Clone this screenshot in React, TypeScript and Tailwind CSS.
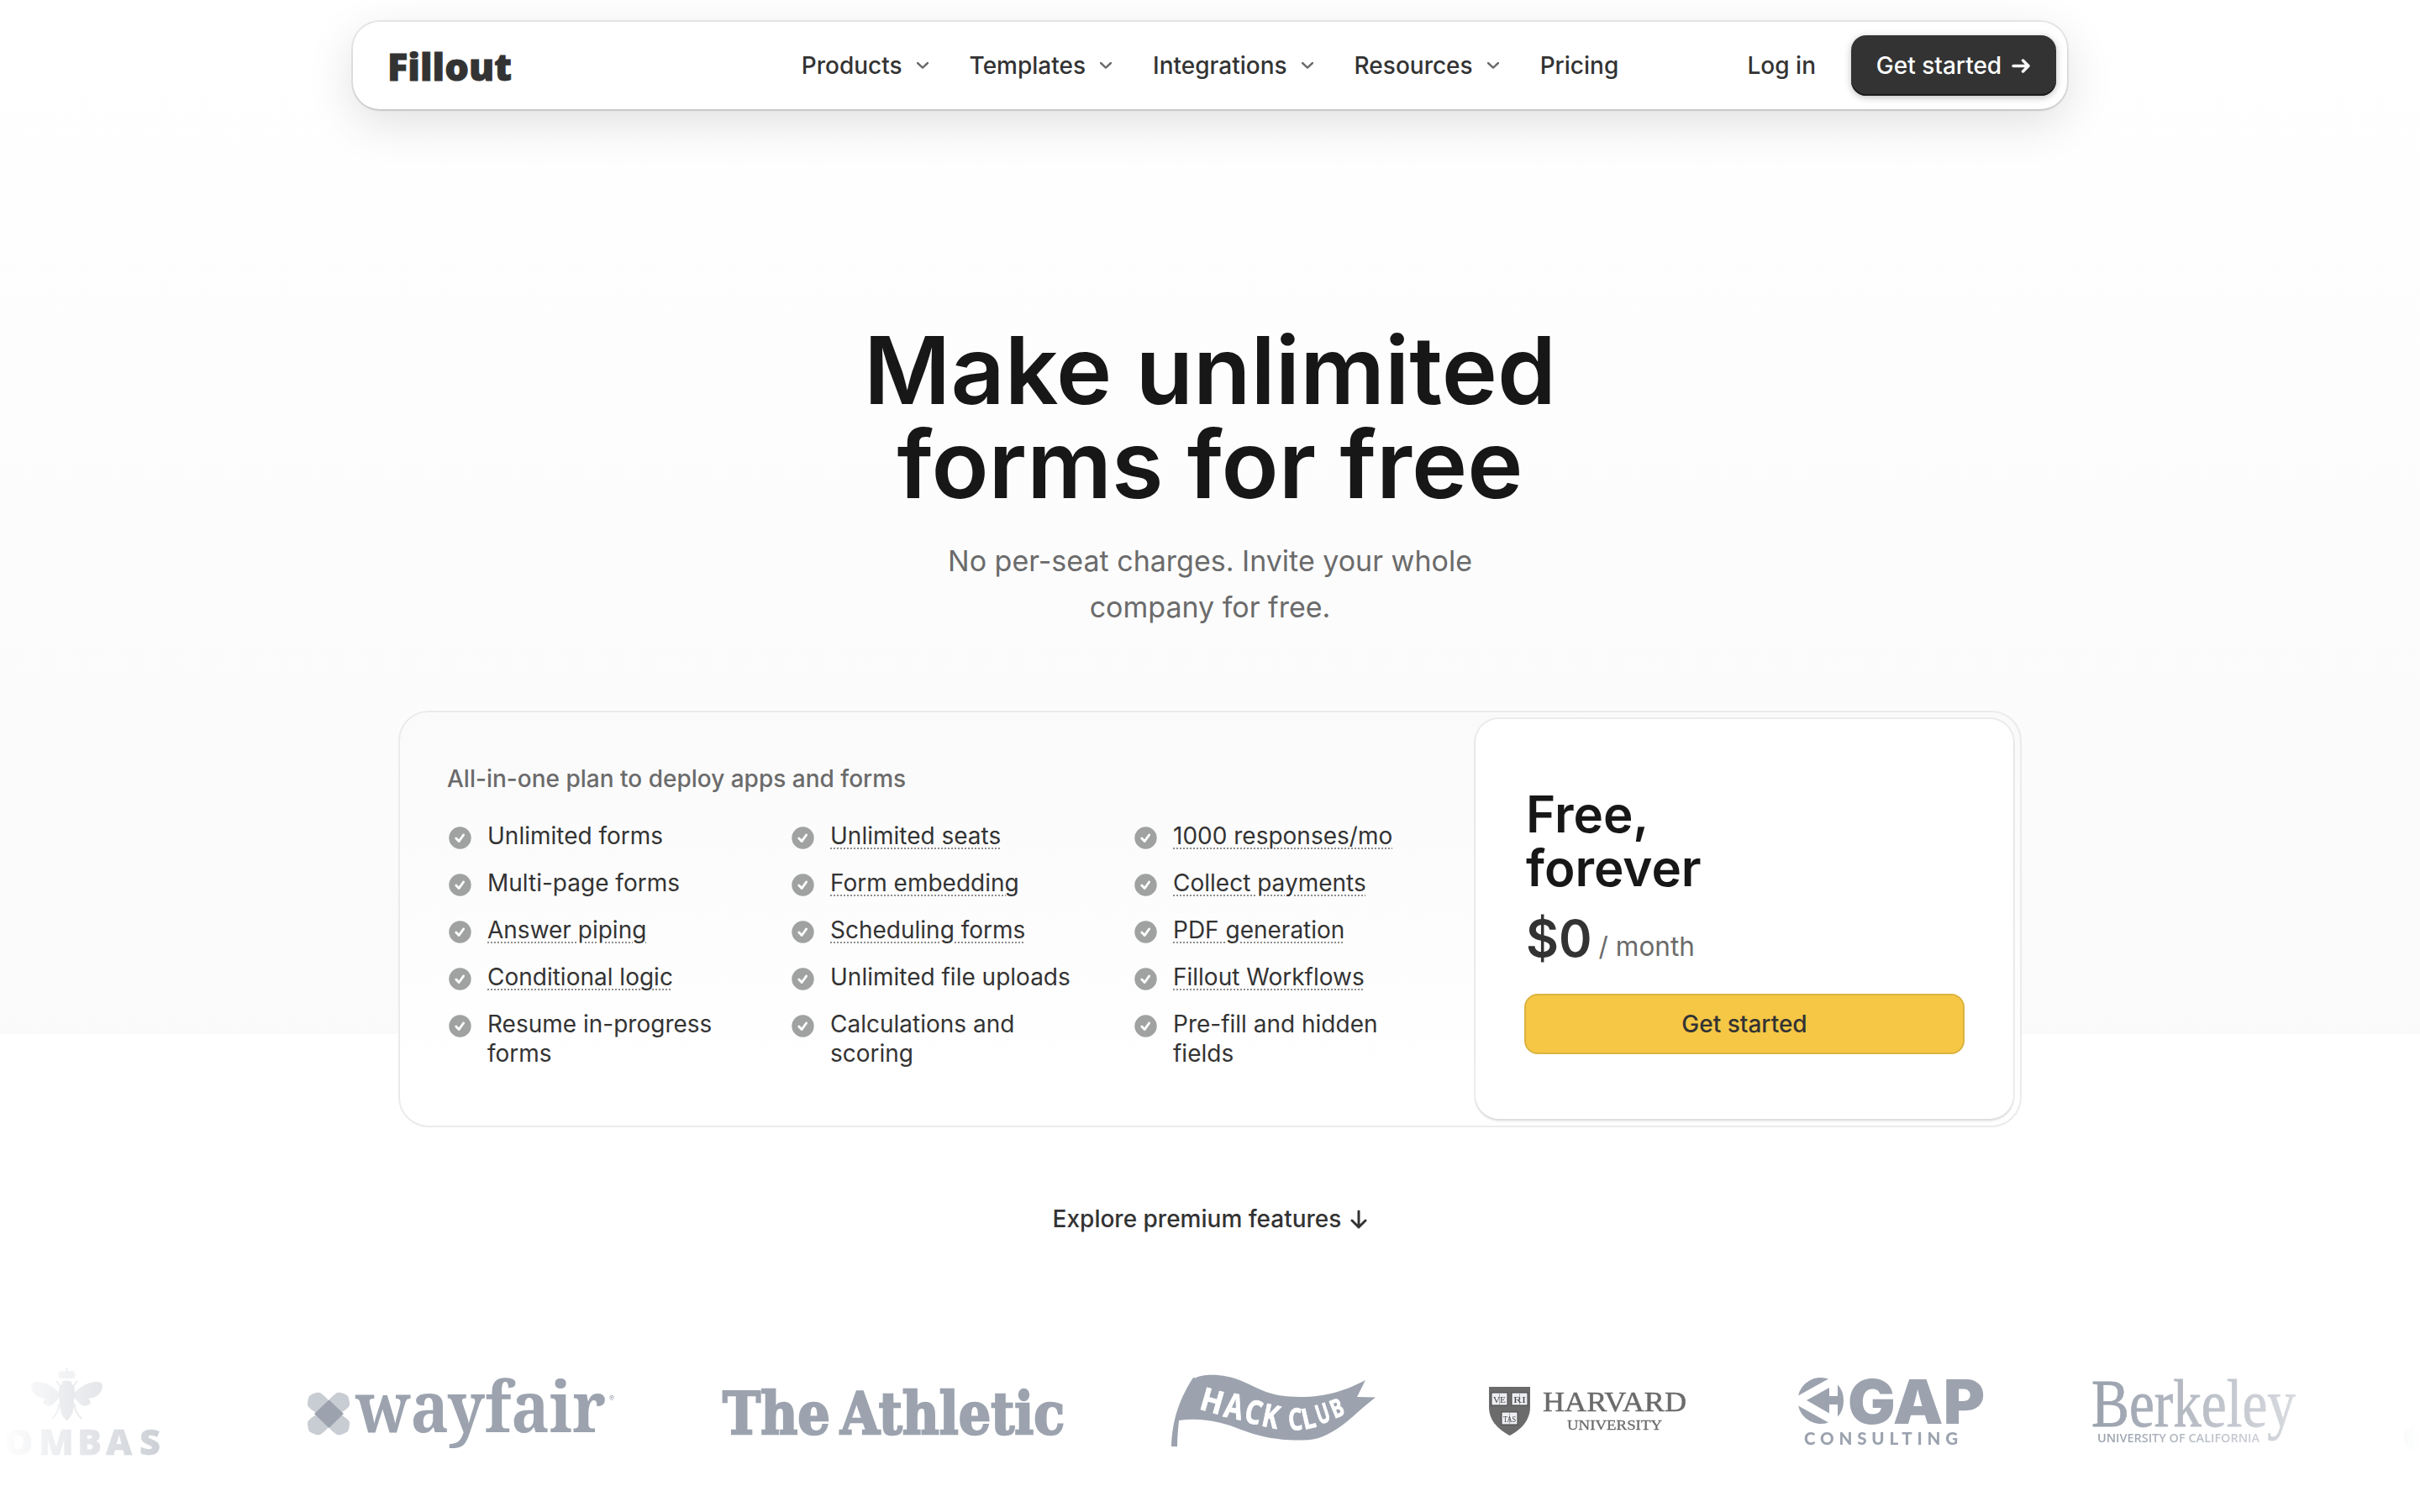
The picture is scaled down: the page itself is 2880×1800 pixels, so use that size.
import { Fragment } from "react";

const NAV = [
  { label: "Products", menu: true },
  { label: "Templates", menu: true },
  { label: "Integrations", menu: true },
  { label: "Resources", menu: true },
  { label: "Pricing", menu: false },
];

type Feature = { label: string; hint?: boolean };

const FEATURES: Feature[][] = [
  [
    { label: "Unlimited forms" },
    { label: "Multi-page forms" },
    { label: "Answer piping", hint: true },
    { label: "Conditional logic", hint: true },
    { label: "Resume in-progress forms" },
  ],
  [
    { label: "Unlimited seats", hint: true },
    { label: "Form embedding", hint: true },
    { label: "Scheduling forms", hint: true },
    { label: "Unlimited file uploads" },
    { label: "Calculations and scoring" },
  ],
  [
    { label: "1000 responses/mo", hint: true },
    { label: "Collect payments", hint: true },
    { label: "PDF generation", hint: true },
    { label: "Fillout Workflows", hint: true },
    { label: "Pre-fill and hidden fields" },
  ],
];

function Chevron() {
  return (
    <svg className="ml-[17px] mr-[2px] mt-[-1px]" width="14" height="8" viewBox="0 0 14 8" fill="none" stroke="#6b6b6b" strokeWidth="2.4">
      <path d="M1 1l6 5.6L13 1" strokeLinecap="round" strokeLinejoin="round" />
    </svg>
  );
}

function Header() {
  return (
    <header className="mx-auto mt-[26px] grid h-[104px] w-[2040px] grid-cols-[1fr_auto_1fr] items-center rounded-[32px] bg-white px-[43px] shadow-[0_0_0_2px_rgba(0,0,0,0.08),0_2px_2px_rgba(0,0,0,0.08),0_16px_56px_rgba(0,0,0,0.12)]">
      <svg width="146" height="44" viewBox="0 0 146 44" className="overflow-visible">
        <text x="-2" y="40" textLength="148" lengthAdjust="spacingAndGlyphs" fontFamily="'Open Sans', sans-serif" fontWeight="800" fontSize="45" fill="#333" stroke="#333" strokeWidth="1">
          Fillout
        </text>
      </svg>
      <nav className="flex items-center text-[28px] font-medium text-[#333]">
        {NAV.map((item, i) => (
          <Fragment key={item.label}>
            <a className={i > 0 ? "ml-[47px]" : ""}>{item.label}</a>
            {item.menu && <Chevron />}
          </Fragment>
        ))}
      </nav>
      <div className="-mr-[30px] flex items-center justify-end text-[28px] font-medium">
        <a className="mr-[42px] text-[#333]">Log in</a>
        <a className="flex h-[72px] w-[244px] items-center justify-center gap-[12px] rounded-[18px] bg-[#333] pr-[1px] text-white shadow-[inset_0_-2px_0_#1c1c1c,0_2px_8px_rgba(0,0,0,0.25)]">
          Get started
          <svg width="22" height="17" viewBox="0 0 22 17" fill="none" stroke="currentColor" strokeWidth="3.5" strokeLinecap="round" strokeLinejoin="round">
            <path d="M2 8.500h18M13.500 2l6.500 6.500-6.500 6.500" />
          </svg>
        </a>
      </div>
    </header>
  );
}

function FeatureItem({ label, hint }: Feature) {
  return (
    <li className="flex w-[408px] items-start">
      <svg className="mt-[6px] mr-[19px] shrink-0" width="27" height="27" viewBox="0 0 27 27">
        <circle cx="13.5" cy="13.5" r="13.2" fill="#a0a2a1" />
        <path d="M8.800 14l3.400 3.500 5.400-7.500" fill="none" stroke="#fff" strokeWidth="2.900" strokeLinecap="round" strokeLinejoin="round" />
      </svg>
      <span className="max-w-[300px]">
        <span className={hint ? "underline decoration-[#8f8f8f] decoration-dotted decoration-[2px] underline-offset-[4px]" : ""}>{label}</span>
      </span>
    </li>
  );
}

function PlanCard() {
  return (
    <section className="mx-auto mt-[96px] flex h-[496px] w-[1932px] rounded-[36px] border-2 border-[#ebebeb] bg-[linear-gradient(to_bottom,#fafafa,#fff_90%)] p-[8px]">
      <div className="min-w-0 flex-1 pt-[50px] pl-[48px]">
        <p className="text-[28px] leading-[42px] font-medium text-[#6b6b6b]">All-in-one plan to deploy apps and forms</p>
        <div className="mt-[30px] ml-[2px] flex text-[28px] leading-[35px] text-[#333]">
          {FEATURES.map((column) => (
            <ul key={column[0].label} className="flex shrink-0 flex-col gap-[21px]">
              {column.map((f) => (
                <FeatureItem key={f.label} {...f} />
              ))}
            </ul>
          ))}
        </div>
      </div>
      <div className="w-[640px] shrink-0 rounded-[28px] bg-white px-[58px] pt-[81px] shadow-[0_0_0_2px_rgba(0,0,0,0.06),0_3px_3px_rgba(0,0,0,0.08)]">
        <h2 className="pl-[2px] text-[60px] leading-[64px] font-semibold text-[#171717]">
          Free,
          <br />
          forever
        </h2>
        <p className="mt-[16px] flex h-[72px] items-baseline gap-[8px] pl-[2px] leading-[72px]">
          <span className="text-[60px] font-semibold text-[#333]">$0</span>
          <span className="-translate-y-[1px] text-[31.5px] text-[#6b6b6b]">/ month</span>
        </p>
        <a className="mt-[30px] flex h-[72px] w-[524px] items-center justify-center rounded-[16px] border-2 border-[#dcb340] bg-[#f5c745] text-[28px] font-medium text-[#333]">
          Get started
        </a>
      </div>
    </section>
  );
}

function Bombas() {
  return (
    <svg width="232" height="110" viewBox="-38 1625 232 110" className="shrink-0 overflow-visible" fill="#9ca3af">
      <path d="M71 1641q-3-5 0-8q3-2.500 5 0l3.500-1.500 3.500 1.500q2-2.500 5 0q3 3 0 8z" opacity=".6" />
      <path d="M79.500 1628.500v5" stroke="#9ca3af" strokeWidth="1.600" />
      <ellipse cx="79.500" cy="1646" rx="6" ry="2.500" />
      <path d="M71 1650q8.500-8 17 0q2 9 0 18q1 16-8.500 23.500q-9.500-7.500-8.500-23.500q-2-9 0-18z" />
      <path d="M71 1659q-12-14-28-14q-8 0-5 10q4 9 16 10q-5 4-1 7q6 4 11-1q4-4 7-8z" opacity=".85" />
      <path d="M88 1659q12-14 28-14q8 0 5 10q-4 9-16 10q5 4 1 7q-6 4-11-1q-4-4-7-8z" opacity=".85" />
      <path d="M70 1671q1 9-8 18M89 1671q-1 9 8 18M73 1652l-6-8M86 1652l6-8" fill="none" stroke="#9ca3af" strokeWidth="1.600" />
      <text y="1732" x="-31 5 46 92 126 166" fontFamily="'Open Sans', sans-serif" fontWeight="800" fontSize="43" stroke="#9ca3af" strokeWidth=".5">
        BOMBAS
      </text>
    </svg>
  );
}

function Wayfair() {
  return (
    <svg width="366" height="86" viewBox="366 1638 366 86" className="shrink-0 overflow-visible" fill="#9ca3af">
      <g opacity=".55">
        <path d="M391 1684l-16-2q-7-4-9-8q0-7 2-11q7-5 13-4q6 4 10 9z" />
        <path d="M391 1684l16-2q7-4 9-8q0-7-2-11q-7-5-13-4q-6 4-10 9z" />
        <path d="M391 1684l-16 2q-7 4-9 8q0 7 2 11q7 5 13 4q6-4 10-9z" />
        <path d="M391 1684l16 2q7 4 9 8q0 7-2 11q-7 5-13 4q-6-4-10-9z" />
      </g>
      <path d="M391.500 1667.500l17.500 16.500-17.500 17-17.500-17z" />
      <text x="423" y="1706" textLength="298" lengthAdjust="spacingAndGlyphs" fontFamily="'Noto Serif', 'DejaVu Serif', serif" fontWeight="700" fontSize="84">
        wayfair
      </text>
      <text x="725" y="1669" fontFamily="Inter, sans-serif" fontSize="9">
        ®
      </text>
    </svg>
  );
}

function Athletic() {
  return (
    <svg
      width="406"
      height="60"
      viewBox="860 1650 406 60"
      className="shrink-0 overflow-visible"
      fill="#9ca3af"
      stroke="#9ca3af"
      strokeWidth="2.500"
      fontFamily="'DejaVu Serif', serif"
      fontWeight="700"
      fontSize="70"
    >
      <text x="860" y="1706.500" textLength="128" lengthAdjust="spacingAndGlyphs">The</text>
      <text x="1000" y="1706.500" textLength="267" lengthAdjust="spacingAndGlyphs">Athletic</text>
    </svg>
  );
}

// each letter follows the wave of the flag, shrinking towards the tip
const FLAG_LETTERS = [
  { c: "H", x: 1426, y: 1678, r: 16, w: 27, size: 38 },
  { c: "A", x: 1455, y: 1687, r: 12, w: 22, size: 41 },
  { c: "C", x: 1479, y: 1693, r: 14, w: 20, size: 39 },
  { c: "K", x: 1500, y: 1698, r: 12, w: 20, size: 38 },
  { c: "C", x: 1534, y: 1704, r: -4, w: 17, size: 36 },
  { c: "L", x: 1552, y: 1703, r: -13, w: 16, size: 34 },
  { c: "U", x: 1570, y: 1697, r: -18, w: 16, size: 32 },
  { c: "B", x: 1588, y: 1690, r: -22, w: 15, size: 30 },
];

function HackClub() {
  return (
    <svg width="244" height="88" viewBox="1394 1637 244 88" className="shrink-0 overflow-visible">
      <path
        d="M1394 1723C1395 1690 1405 1664 1420 1641l3 .5C1432 1636 1458 1636 1480 1646C1500 1655 1512 1664 1547 1664C1580 1664 1602 1656 1625 1644L1615 1664L1637 1664.500C1622 1676 1608 1690 1597 1698C1580 1710 1568 1715.500 1550 1715.500C1520 1716 1498 1711 1477 1703C1455 1694 1430 1688 1403 1692C1402 1702 1401 1712 1401 1723z"
        fill="#9ca3af"
      />
      {FLAG_LETTERS.map((l) => (
        <text
          key={l.x}
          x={l.x}
          y={l.y}
          transform={`rotate(${l.r} ${l.x} ${l.y})`}
          textLength={l.w}
          lengthAdjust="spacingAndGlyphs"
          fontFamily="'Open Sans', sans-serif"
          fontWeight="700"
          fontSize={l.size}
          fill="#fff"
          stroke="#fff"
          strokeWidth=".8"
          strokeLinejoin="round"
        >
          {l.c}
        </text>
      ))}
    </svg>
  );
}

const BOOKS = [
  { t: "VE", x: 1784.5, y: 1667 },
  { t: "RI", x: 1808.5, y: 1667 },
  { t: "TAS", x: 1796.5, y: 1690 },
];

function Harvard() {
  return (
    <svg width="235" height="60" viewBox="1772 1651 235 60" className="shrink-0 overflow-visible" fontFamily="'Liberation Serif', serif">
      <path d="M1772 1652h49v24c0 16-11 27-24.500 34c-13.500-7-24.500-18-24.500-34z" fill="#6b6b6b" />
      {BOOKS.map((b) => (
        <g key={b.t}>
          <rect x={b.x - 9.5} y={b.y - 8} width="19" height="15" fill="#eceef2" stroke="#444" strokeWidth="1" />
          <path d={`M${b.x} ${b.y - 8}v15`} stroke="#999" strokeWidth=".8" />
          <text x={b.x - 7.5} y={b.y + 3.5} textLength="15" lengthAdjust="spacingAndGlyphs" fontSize="10.5" fill="#444">{b.t}</text>
        </g>
      ))}
      <text x="1836" y="1681" textLength="171" fontSize="33" lengthAdjust="spacingAndGlyphs" fill="#6b6b6b" stroke="#6b6b6b" strokeWidth=".5">HARVARD</text>
      <text x="1865" y="1702.500" textLength="113" fontSize="17.500" lengthAdjust="spacingAndGlyphs" fill="#6b6b6b" stroke="#6b6b6b" strokeWidth=".3">UNIVERSITY</text>
    </svg>
  );
}

function GapConsulting() {
  return (
    <svg width="223" height="82" viewBox="2139 1640 223 82" className="shrink-0 overflow-visible" fill="#9ca3af">
      <path d="M2140 1662.500a27.500 27.500 0 0 1 36-20z" />
      <path d="M2140 1674.500a27.500 27.500 0 0 0 36 20z" />
      <path d="M2150 1668l27-15v10h10v-13.500q7 7 7 19t-7 19v-14.500h-10v10.500z" />
      <text x="2199" y="1696" textLength="163" lengthAdjust="spacingAndGlyphs" fontFamily="Inter, sans-serif" fontWeight="900" fontSize="73">GAP</text>
      <text x="2147" y="1720.500" textLength="183" fontFamily="Lato, sans-serif" fontWeight="900" fontSize="20.500">CONSULTING</text>
    </svg>
  );
}

function Berkeley() {
  return (
    <svg width="242" height="80" viewBox="2490 1640 242 80" className="shrink-0 overflow-visible" fill="#9ca3af">
      <text x="2489" y="1698" textLength="243" lengthAdjust="spacingAndGlyphs" fontFamily="'Liberation Serif', serif" fontSize="80" stroke="#9ca3af" strokeWidth=".8">Berkeley</text>
      <text x="2496" y="1717" textLength="193" lengthAdjust="spacingAndGlyphs" fontFamily="'Open Sans', sans-serif" fontWeight="600" fontSize="15">UNIVERSITY OF CALIFORNIA</text>
    </svg>
  );
}

function LogoStrip() {
  return (
    <div className="mt-[153px] h-[120px] overflow-hidden [mask-image:linear-gradient(to_right,transparent,#000_13%,#000_87%,transparent)]">
      <div className="-ml-[38px] flex items-center">
        <Bombas />
        <div className="w-[172px] shrink-0" />
        <Wayfair />
        <div className="w-[128px] shrink-0" />
        <Athletic />
        <div className="w-[128px] shrink-0" />
        <HackClub />
        <div className="w-[134px] shrink-0" />
        <Harvard />
        <div className="w-[132px] shrink-0" />
        <GapConsulting />
        <div className="w-[128px] shrink-0" />
        <Berkeley />
        <div className="mt-[64px] ml-[129px] size-[30px] shrink-0 rounded-full bg-gray-400" />
      </div>
    </div>
  );
}

export default function App() {
  return (
    <div className="flex h-[1800px] w-[2880px] flex-col overflow-hidden bg-[linear-gradient(to_bottom,#fff_0,#fafafa_1231px,#fff_1231px)] font-[Inter,sans-serif]">
      <Header />
      <main>
        <h1 className="mt-[254px] text-center text-[112px] leading-[112px] font-semibold text-[#171717]">
          Make unlimited
          <br />
          forms for free
        </h1>
        <p className="mt-[32px] text-center text-[34px] leading-[55px] text-[#6b6b6b]">
          No per-seat charges. Invite your whole
          <br />
          company for free.
        </p>
        <PlanCard />
        <div className="mt-[88px] flex h-[42px] items-center justify-center gap-[11px] text-[28px] font-medium text-[#333]">
          Explore premium features
          <svg width="20" height="23" viewBox="0 0 20 23" fill="none" stroke="currentColor" strokeWidth="3" strokeLinecap="round" strokeLinejoin="round">
            <path d="M10 2v19M2 13l8 8 8-8" />
          </svg>
        </div>
        <LogoStrip />
      </main>
    </div>
  );
}
